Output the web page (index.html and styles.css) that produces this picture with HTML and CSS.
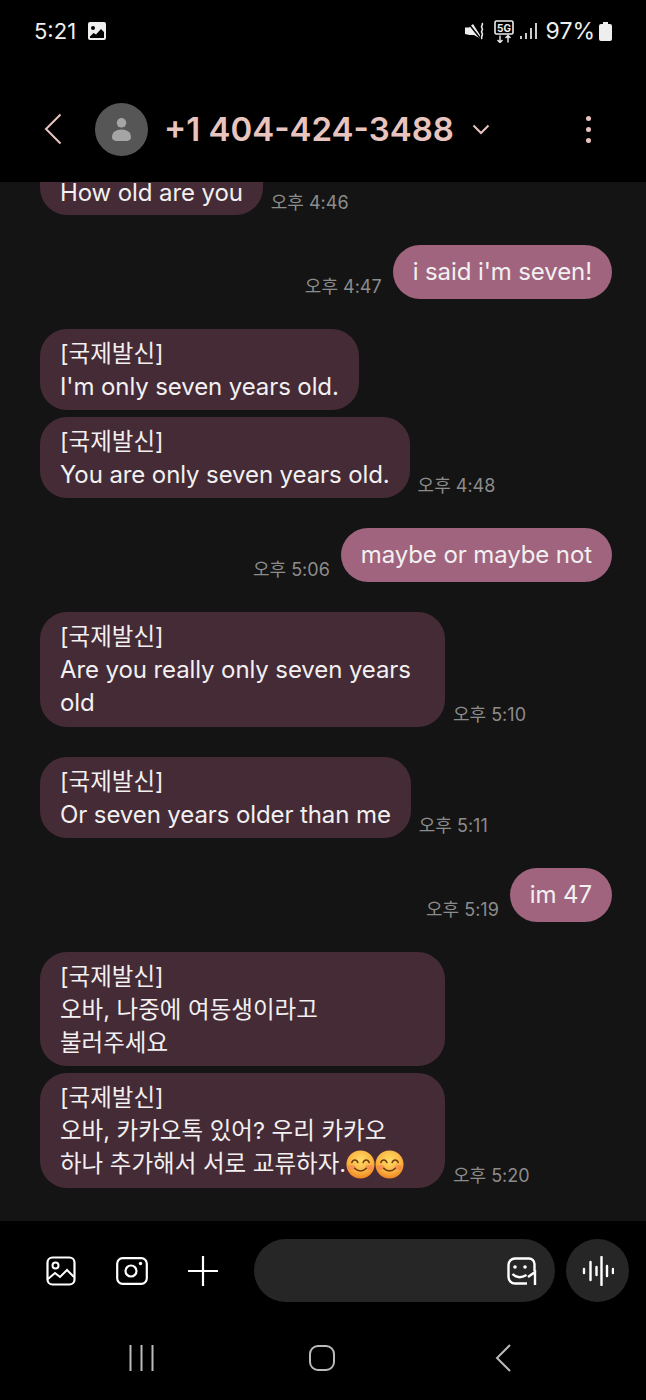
FILE: index.html
```html
<!DOCTYPE html>
<html lang="ko">
<head>
<meta charset="utf-8">
<title>Messages</title>
<link rel="stylesheet" href="styles.css">
</head>
<body>
<div class="phone">
  <header class="top">
    <div class="status">
      <div class="status-left">
        <span class="clock">5:21</span>
        <svg class="ic-pic" viewBox="0 0 20 20"><path fill="#eee" fill-rule="evenodd" d="M3 1h14a2 2 0 0 1 2 2v14a2 2 0 0 1-2 2H3a2 2 0 0 1-2-2V3a2 2 0 0 1 2-2zM6 5a2 2 0 1 0 0 4 2 2 0 0 0 0-4zM3 15.500V17h14v-6l-3-3-5 5.500-2.500-1.500z"/></svg>
      </div>
      <div class="status-right">
        <svg class="ic-mute" viewBox="0 0 20 20"><path fill="#eee" d="M0 6.500h4L8 3l7 11v3.500L9 14H4.500L0 13z"/><path stroke="#000" stroke-width="1.500" d="M3 2l12 15" fill="none"/><path stroke="#eee" stroke-width="1.600" fill="none" d="M17 2c2 2-2 3 0 5s-2 3 0 5-2 3 0 6"/></svg>
        <svg class="ic-5g" viewBox="0 0 20 23"><rect x="1" y="1" width="18" height="13" rx="1.500" fill="none" stroke="#eee" stroke-width="1.600"/><text x="10" y="11.500" class="five-g">5G</text><path stroke="#eee" stroke-width="1.400" fill="none" d="M6 15.500v7M3.500 20 6 22.500 8.500 20M14 22.500v-7M11.500 18 14 15.500l2.500 2.500"/></svg>
        <svg class="ic-signal" viewBox="0 0 18 16"><g fill="#ccc"><rect x="0" y="13" width="2" height="3"/><rect x="5" y="10" width="2" height="6"/><rect x="10" y="5" width="2" height="11"/><rect x="15" y="0" width="2" height="16"/></g></svg>
        <span class="batt-text">97%</span>
        <svg class="ic-batt" viewBox="0 0 13 19"><path fill="#eee" d="M4 0h5v2h2a2 2 0 0 1 2 2v13a2 2 0 0 1-2 2H2a2 2 0 0 1-2-2V4a2 2 0 0 1 2-2h2z"/></svg>
      </div>
    </div>
    <div class="toolbar">
      <svg class="ic-back" viewBox="0 0 18 32"><path d="M16.500 1.500 2 16l14.500 14.500" fill="none" stroke="#e8c4bf" stroke-width="2"/></svg>
      <div class="avatar">
        <svg class="ic-person" viewBox="0 0 20 26"><circle cx="10" cy="6" r="5" fill="#a5a5a5"/><path fill="#a5a5a5" d="M0 21c0-5 4-8 10-8s10 3 10 8c0 3-2 4-4 4H4c-2 0-4-1-4-4z"/></svg>
      </div>
      <span class="name">+1 404-424-3488</span>
      <svg class="ic-chev" viewBox="0 0 18 11"><path d="M1.500 1.500 9 9l7.500-7.500" fill="none" stroke="#e8c4bf" stroke-width="2"/></svg>
      <div class="dots"><i></i><i></i><i></i></div>
    </div>
  </header>

  <main class="chat">
    <div class="thread">
      <div class="row">
        <div class="bubble in cut">How old are you</div><span class="time">오후 4:46</span>
      </div>
      <div class="row out group">
        <span class="time">오후 4:47</span><div class="bubble sent solo">i said i'm seven!</div>
      </div>
      <div class="row group">
        <div class="bubble in"><span class="ko">[국제발신]</span><br>I'm only seven years old.</div>
      </div>
      <div class="row near">
        <div class="bubble in"><span class="ko">[국제발신]</span><br>You are only seven years old.</div><span class="time">오후 4:48</span>
      </div>
      <div class="row out group">
        <span class="time">오후 5:06</span><div class="bubble sent solo">maybe or maybe not</div>
      </div>
      <div class="row group">
        <div class="bubble in wide"><span class="ko">[국제발신]</span><br>Are you really only seven years<br>old</div><span class="time">오후 5:10</span>
      </div>
      <div class="row group">
        <div class="bubble in"><span class="ko">[국제발신]</span><br>Or seven years older than me</div><span class="time">오후 5:11</span>
      </div>
      <div class="row out group">
        <span class="time">오후 5:19</span><div class="bubble sent solo">im 47</div>
      </div>
      <div class="row group">
        <div class="bubble in wide"><span class="ko">[국제발신]<br>오바, 나중에 여동생이라고<br>불러주세요</span></div>
      </div>
      <div class="row near">
        <div class="bubble in wide"><span class="ko">[국제발신]<br>오바, 카카오톡 있어? 우리 카카오<br>하나 추가해서 서로 교류하자.</span><svg class="emoji" viewBox="0 0 30 30"><use href="#smile"/></svg><svg class="emoji" viewBox="0 0 30 30"><use href="#smile"/></svg></div><span class="time">오후 5:20</span>
      </div>
    </div>
  </main>

  <section class="composer">
    <svg class="ic-gallery" viewBox="0 0 30 30"><rect x="1.500" y="1.500" width="27" height="27" rx="5" fill="none" stroke="#fff" stroke-width="2.200"/><circle cx="9.500" cy="9.500" r="3" fill="none" stroke="#fff" stroke-width="2"/><path d="M2 23l7-6 5 4 7-7 7 7" fill="none" stroke="#fff" stroke-width="2"/></svg>
    <svg class="ic-camera" viewBox="0 0 32 28"><rect x="1.200" y="1.200" width="29.600" height="25.600" rx="5.500" fill="none" stroke="#fff" stroke-width="2.200"/><circle cx="15" cy="14" r="5.500" fill="none" stroke="#fff" stroke-width="2.200"/><circle cx="24.500" cy="6.500" r="1.700" fill="#fff"/></svg>
    <svg class="ic-plus" viewBox="0 0 30 30"><path d="M15 0v30M0 15h30" stroke="#fff" stroke-width="2.200"/></svg>
    <div class="input">
      <svg class="ic-sticker" viewBox="0 0 30 28"><path d="M20 26.500H8a6.500 6.500 0 0 1-6.500-6.500V8A6.500 6.500 0 0 1 8 1.500h14A5.500 5.500 0 0 1 27.500 7v7" fill="none" stroke="#fff" stroke-width="2.400"/><circle cx="8" cy="10" r="1.800" fill="#fff"/><circle cx="18" cy="10" r="1.800" fill="#fff"/><path d="M5.500 17c4 4 9 4 14 1M21 20l7-5v13" fill="none" stroke="#fff" stroke-width="2.400"/></svg>
    </div>
    <div class="voice">
      <svg class="ic-voice" viewBox="0 0 32 30"><g stroke="#fff" stroke-width="2.400" stroke-linecap="round"><path d="M2 13v4M8.500 6v18M14.500 11v8M19.500 1v28M25 10v10M31 13v4"/></g></svg>
    </div>
  </section>

  <nav class="navbar">
    <svg class="ic-recents" viewBox="0 0 25 26"><path d="M1.500 0v26M12.500 0v26M23.500 0v26" stroke="#bbb" stroke-width="2"/></svg>
    <div class="home"></div>
    <svg class="ic-navback" viewBox="0 0 16 28"><path d="M15 1 2 14l13 13" fill="none" stroke="#bbb" stroke-width="2"/></svg>
  </nav>
</div>
<svg class="defs" width="0" height="0"><defs>
  <radialGradient id="face" cx="50%" cy="35%" r="65%"><stop offset="0" stop-color="#fddc68"/><stop offset="0.650" stop-color="#fbb340"/><stop offset="1" stop-color="#ee8524"/></radialGradient>
  <g id="smile"><circle cx="15" cy="15" r="14.500" fill="url(#face)"/><ellipse cx="6" cy="18" rx="4" ry="2.500" fill="#f2795a" opacity=".55"/><ellipse cx="24" cy="18" rx="4" ry="2.500" fill="#f2795a" opacity=".55"/><path d="M6 13c1.300-3.500 5-3.500 6.300 0M17.700 13c1.300-3.500 5-3.500 6.300 0" fill="none" stroke="#6b3a12" stroke-width="1.600" stroke-linecap="round"/><path d="M9 19c3 3.500 9 3.500 12 0" fill="none" stroke="#6b3a12" stroke-width="1.600" stroke-linecap="round"/></g>
</defs></svg>
</body>
</html>
```
FILE: styles.css
```css
* { box-sizing: border-box; }
html, body { margin: 0; padding: 0; background: #000; }
body { font-family: "Inter", "Noto Sans CJK KR", sans-serif; }
svg { display: block; flex: none; }
.defs { position: absolute; }

.phone { width: 646px; height: 1400px; display: flex; flex-direction: column; overflow: hidden; background: #000; }

.top { height: 182px; flex: none; background: #000; }
.status { height: 62px; display: flex; justify-content: space-between; align-items: center; padding: 0 34px; color: #eee; }
.status-left, .status-right { display: flex; align-items: center; }
.clock { font-size: 22px; color: #eee; }
.ic-pic { width: 20px; height: 20px; margin-left: 11px; }
.ic-mute { width: 20px; height: 20px; margin-right: 9px; }
.ic-5g { width: 20px; height: 23px; margin-right: 6px; }
.five-g { font: 700 10px "Inter", sans-serif; fill: #eee; text-anchor: middle; }
.ic-signal { width: 18px; height: 16px; margin-right: 8px; }
.batt-text { font-size: 23px; color: #eee; }
.ic-batt { width: 13px; height: 19px; margin-left: 4px; }

.toolbar { height: 120px; padding: 14px 0 0 44px; display: flex; align-items: center; }
.ic-back { width: 18px; height: 32px; }
.avatar { width: 53px; height: 53px; border-radius: 50%; background: #565656; margin-left: 33px; display: flex; align-items: center; justify-content: center; }
.ic-person { width: 19px; height: 25px; }
.name { margin-left: 16px; font-size: 33px; font-weight: 600; color: #e8c4bf; white-space: nowrap; }
.ic-chev { width: 18px; height: 11px; margin-left: 18px; }
.dots { margin-left: 96px; display: flex; flex-direction: column; gap: 6px; }
.dots i { display: block; width: 5px; height: 5px; border-radius: 50%; background: #e8c4bf; }

.chat { height: 1039px; flex: none; background: #141414; overflow: hidden; }
.thread { padding: 0 34px 0 40px; }
.row { display: flex; align-items: flex-end; gap: 8px; }
.row.out { justify-content: flex-end; gap: 11px; }
.row.group { margin-top: 30px; }
.row.near { margin-top: 7px; }
.bubble { font-size: 24px; letter-spacing: -0.1px; line-height: 33px; color: #f2f0f0; padding: 8px 20px 7px; border-radius: 27px; white-space: nowrap; }
.bubble.solo { padding: 10px 20px 11px; }
.bubble.cut { line-height: 20px; padding: 1px 20px 12px; border-radius: 0 0 27px 27px; }
.bubble.in { background: #452b36; }
.bubble.sent { background: #a0647e; }
.bubble.wide { width: 405px; padding-bottom: 7.500px; }
.ko { font-size: 23.500px; letter-spacing: 0; }
.time { font-size: 18px; line-height: 24px; color: #8c8c8c; white-space: nowrap; }
.emoji { display: inline-block; width: 29px; height: 29px; vertical-align: -7px; }

.composer { height: 99px; flex: none; background: #000; display: flex; align-items: center; padding: 0 17px 0 46px; }
.ic-gallery { width: 30px; height: 30px; }
.ic-camera { width: 32px; height: 28px; margin-left: 40px; }
.ic-plus { width: 30px; height: 30px; margin-left: 40px; }
.input { width: 301px; height: 63px; margin-left: 36px; border-radius: 32px; background: #262626; display: flex; align-items: center; justify-content: flex-end; padding-right: 18px; }
.ic-sticker { width: 30px; height: 28px; }
.voice { width: 63px; height: 63px; margin-left: 11px; border-radius: 50%; background: #262626; display: flex; align-items: center; justify-content: center; }
.ic-voice { width: 32px; height: 30px; }

.navbar { flex: 1; background: #000; display: flex; align-items: center; padding: 0 0 4px 129px; }
.ic-recents { width: 25px; height: 26px; }
.home { width: 26px; height: 26px; margin-left: 155px; border: 2.500px solid #bbb; border-radius: 9px; }
.ic-navback { width: 16px; height: 28px; margin-left: 160px; }
```
